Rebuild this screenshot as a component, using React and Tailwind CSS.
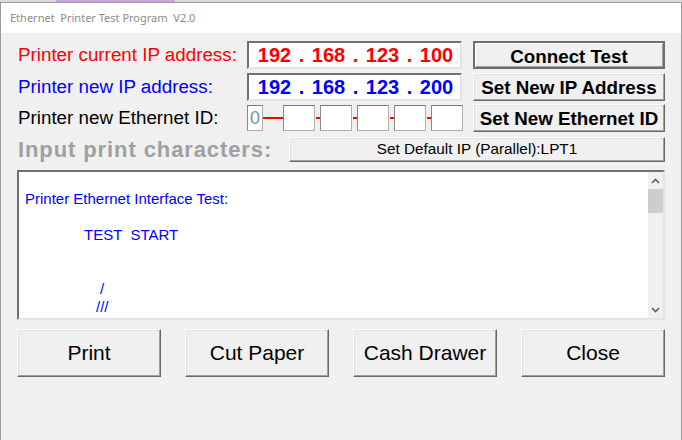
import React from "react";

const raised =
  "bg-[#f0f0f0] border border-t-white border-l-white border-b-[#696969] border-r-[#696969] shadow-[inset_-1px_-1px_0_#a0a0a0,inset_1px_1px_0_#e3e3e3]";
const sunken =
  "bg-white border-2 border-t-[#707070] border-l-[#707070] border-b-[#e3e3e3] border-r-[#e3e3e3]";
const thinBox = "bg-white border border-[#b0b0b0] border-t-[#7a7a7a] border-l-[#8a8a8a]";

function IpBox({ parts, color }) {
  return (
    <div className={`${sunken} w-[215px] h-[28px] flex items-center pl-[8px] font-bold text-[20px] ${color}`}>
      {parts.map((p, i) => (
        <React.Fragment key={i}>
          {i > 0 && <span className="w-[19px] text-center">.</span>}
          <span className="w-[35px] text-center">{p}</span>
        </React.Fragment>
      ))}
    </div>
  );
}

function Dash() {
  return <div className="w-[5px] flex justify-center"><div className="w-[4px] h-[2px] bg-[#ff0000]" /></div>;
}

function Arrow({ down }) {
  return (
    <svg width="9" height="6" viewBox="0 0 9 6" className="mx-auto">
      <path d={down ? "M1 1 L4.5 4.5 L8 1" : "M1 5 L4.5 1.5 L8 5"} fill="none" stroke="#606060" strokeWidth="1.6" />
    </svg>
  );
}

export default function App() {
  return (
    <div className="w-[682px] h-[440px] bg-[#f0f0f0] flex flex-col overflow-hidden font-['Liberation_Sans',Arial,sans-serif] text-black">
      <div className="h-[2px] flex bg-[#dadada]">
        <div className="w-[56px]" />
        <div className="w-[119px] bg-[#c9a6dc]" />
      </div>
      <div className="flex-1 flex flex-col border-l border-r border-t border-[#9a9a9a]">
        <div className="h-[30px] bg-white flex items-center pl-[9px]">
          <span className="whitespace-pre text-[11px] text-[#8a8a8a] font-['Noto_Sans',sans-serif]">
            Ethernet  Printer Test Program  V2.0
          </span>
        </div>

        <div className="flex flex-col pl-[16px] pt-[8px]">
          {/* row 1 */}
          <div className="flex items-center h-[28px]">
            <div className="w-[230px] pl-[1px] text-[18.8px] text-[#ff0000]">Printer current IP address:</div>
            <IpBox parts={["192", "168", "123", "100"]} color="text-[#ff0000]" />
            <button className="ml-[11px] w-[192px] h-[28px] bg-[#f0f0f0] border-2 border-[#6e6e6e] shadow-[inset_1px_1px_0_#ffffff,inset_-1px_-1px_0_#a0a0a0] font-bold text-[18.8px]">
              Connect Test
            </button>
          </div>

          {/* row 2 */}
          <div className="flex items-center h-[28px] mt-[4px]">
            <div className="w-[230px] pl-[1px] text-[18.8px] text-[#0000ff]">Printer new IP address:</div>
            <IpBox parts={["192", "168", "123", "200"]} color="text-[#0000ff]" />
            <button className={`${raised} ml-[11px] w-[192px] h-[28px] font-bold text-[18.8px]`}>
              Set New IP Address
            </button>
          </div>

          {/* row 3 */}
          <div className="flex items-center h-[28px] mt-[3px]">
            <div className="w-[230px] pl-[1px] text-[18.8px]">Printer new Ethernet ID:</div>
            <div className="w-[216px] flex items-center">
              <div className={`${thinBox} w-[16px] h-[26px] flex items-center justify-center text-[18px] text-[#8090a0]`}>0</div>
              <div className="w-[20px] h-[2px] bg-[#ff0000]" />
              <div className={`${thinBox} w-[32px] h-[26px]`} />
              <Dash />
              <div className={`${thinBox} w-[32px] h-[26px]`} />
              <Dash />
              <div className={`${thinBox} w-[32px] h-[26px]`} />
              <Dash />
              <div className={`${thinBox} w-[32px] h-[26px]`} />
              <Dash />
              <div className={`${thinBox} w-[32px] h-[26px]`} />
            </div>
            <button className={`${raised} ml-[10px] w-[192px] h-[28px] font-bold text-[18.8px]`}>
              Set New Ethernet ID
            </button>
          </div>

          {/* row 4 */}
          <div className="flex items-center h-[25px] mt-[5px]">
            <div className="w-[272px] pl-[1px] font-bold text-[22px] tracking-[0.9px] text-[#a0a0a0] whitespace-nowrap">Input print characters:</div>
            <button className={`${raised} w-[376px] h-[25px] text-[15.3px]`}>
              Set Default IP (Parallel):LPT1
            </button>
          </div>

          {/* text area */}
          <div className={`${sunken} mt-[8px] w-[648px] h-[150px] flex`}>
            <div className="flex-1 pl-[6px] text-[15px] leading-[18px] text-[#0000ff]">
              <div className="h-[18px]" />
              <div>Printer Ethernet Interface Test:</div>
              <div className="h-[18px]" />
              <div className="pl-[59px] whitespace-pre">TEST  START</div>
              <div className="h-[18px]" />
              <div className="h-[18px]" />
              <div className="pl-[75px]">/</div>
              <div className="pl-[71px]">///</div>
            </div>
            <div className="w-[15px] bg-[#f0f0f0] flex flex-col">
              <div className="h-[17px] flex items-center"><Arrow /></div>
              <div className="h-[24px] bg-[#cdcdcd]" />
              <div className="flex-1" />
              <div className="h-[17px] flex items-center"><Arrow down /></div>
            </div>
          </div>

          {/* bottom buttons */}
          <div className="flex gap-[24px] mt-[9px]">
            {["Print", "Cut Paper", "Cash Drawer", "Close"].map((t) => (
              <button key={t} className={`${raised} w-[144px] h-[48px] text-[21px]`}>
                {t}
              </button>
            ))}
          </div>
        </div>
      </div>
    </div>
  );
}
